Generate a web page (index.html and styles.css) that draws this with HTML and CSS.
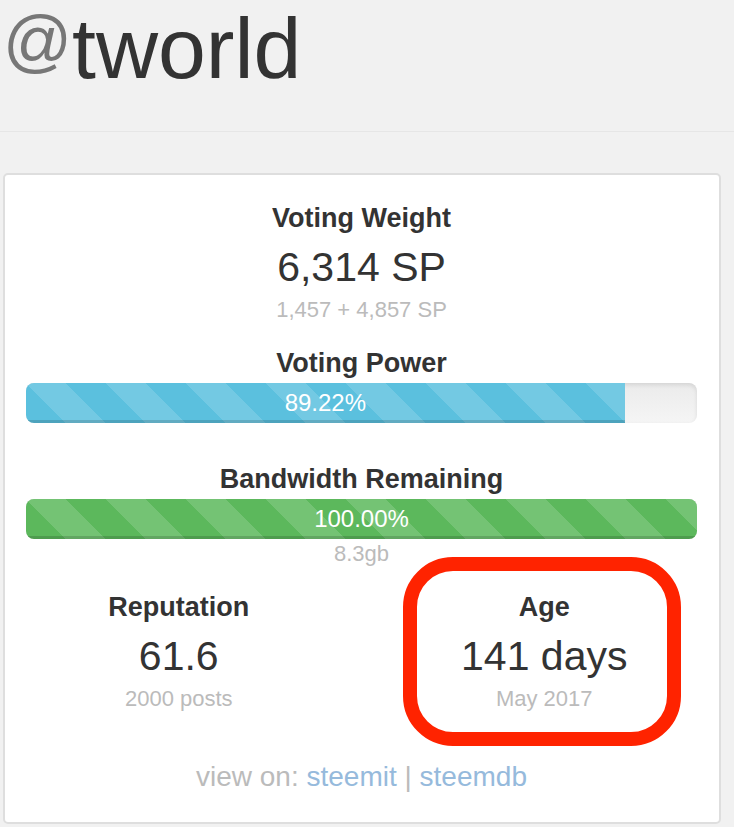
FILE: index.html
```html
<!DOCTYPE html>
<html lang="en">
<head>
<meta charset="utf-8">
<title>@tworld</title>
<link rel="stylesheet" href="styles.css">
</head>
<body>
<div class="page">
  <header class="header">
    <h1 class="title"><span class="at">@</span>tworld</h1>
  </header>

  <main class="card">
    <section class="stat stat-weight">
      <div class="label">Voting Weight</div>
      <div class="value">6,314 SP</div>
      <div class="sub">1,457 + 4,857 SP</div>
    </section>

    <section class="stat stat-power">
      <div class="label">Voting Power</div>
      <div class="progress">
        <div class="bar bar-info" style="width: 89.22%">89.22%</div>
      </div>
    </section>

    <section class="stat stat-bandwidth">
      <div class="label">Bandwidth Remaining</div>
      <div class="progress">
        <div class="bar bar-success" style="width: 100%">100.00%</div>
      </div>
      <div class="sub sub-tight">8.3gb</div>
    </section>

    <div class="pair">
      <section class="stat">
        <div class="label">Reputation</div>
        <div class="value">61.6</div>
        <div class="sub">2000 posts</div>
      </section>
      <section class="stat">
        <div class="label">Age</div>
        <div class="value">141 days</div>
        <div class="sub">May 2017</div>
      </section>
    </div>

    <div class="links">view on: <a href="#">steemit</a> <span class="sep">|</span> <a href="#">steemdb</a></div>
  </main>

  <div class="highlight" aria-hidden="true"></div>
</div>
</body>
</html>
```

FILE: styles.css
```css
* {
  box-sizing: border-box;
}

html, body {
  margin: 0;
  padding: 0;
  background: #f1f1f1;
}

body {
  font-family: "Liberation Sans", Arial, Helvetica, sans-serif;
  color: #333333;
}

.page {
  position: relative;
  width: 734px;
  height: 827px;
  overflow: hidden;
}

.header {
  padding: 5px 0 40px 3px;
  border-bottom: 1px solid #e6e6e6;
}

.title {
  margin: 0;
  font-size: 86px;
  line-height: 86px;
  font-weight: 400;
  color: #333333;
  white-space: nowrap;
}

.at {
  font-size: 68px;
  line-height: 1;
  vertical-align: 14px;
  color: #777777;
}

.card {
  margin: 41px 0 0 3px;
  width: 718px;
  background: #ffffff;
  border: 2px solid #dedede;
  border-radius: 5px;
  padding: 28px 22px 30px 21px;
  text-align: center;
}

.label {
  font-size: 27px;
  line-height: 30px;
  font-weight: 700;
  color: #333333;
}

.value {
  margin-top: 12px;
  font-size: 41px;
  line-height: 45px;
  color: #333333;
}

.sub {
  margin-top: 5px;
  font-size: 22px;
  line-height: 30px;
  color: #bbbbbb;
}

.sub-tight {
  margin-top: 0;
}

.stat-weight {
  margin-bottom: 23px;
}

.stat-power {
  margin-bottom: 41px;
}

.stat-bandwidth {
  margin-bottom: 23px;
}

.progress {
  margin-top: 5px;
  height: 40px;
  border-radius: 8px;
  background: linear-gradient(#ebebeb, #f5f5f5);
  box-shadow: inset 0 2px 4px rgba(0, 0, 0, 0.1);
  overflow: hidden;
  display: flex;
}

.bar {
  height: 40px;
  line-height: 40px;
  font-size: 24px;
  color: #ffffff;
  text-align: center;
  box-shadow: inset 0 -3px 0 rgba(0, 0, 0, 0.15);
  background-size: 80px 80px;
}

.bar-info {
  background-color: #5bc0de;
  background-image: linear-gradient(45deg,
    rgba(255, 255, 255, 0.15) 25%, transparent 25%,
    transparent 50%, rgba(255, 255, 255, 0.15) 50%,
    rgba(255, 255, 255, 0.15) 75%, transparent 75%, transparent);
}

.bar-success {
  background-color: #5cb85c;
  background-image: linear-gradient(45deg,
    rgba(255, 255, 255, 0.15) 25%, transparent 25%,
    transparent 50%, rgba(255, 255, 255, 0.15) 50%,
    rgba(255, 255, 255, 0.15) 75%, transparent 75%, transparent);
}

.pair {
  display: grid;
  grid-template-columns: 1fr 1fr;
  column-gap: 60px;
}

.links {
  margin-top: 48px;
  font-size: 28px;
  line-height: 30px;
  color: #bbbbbb;
}

.links a {
  color: #96badc;
  text-decoration: none;
}

.sep {
  color: #bbbbbb;
}

.highlight {
  position: absolute;
  left: 403px;
  top: 557px;
  width: 278px;
  height: 189px;
  border: 14px solid #ff2300;
  border-radius: 50px;
  pointer-events: none;
}
```
